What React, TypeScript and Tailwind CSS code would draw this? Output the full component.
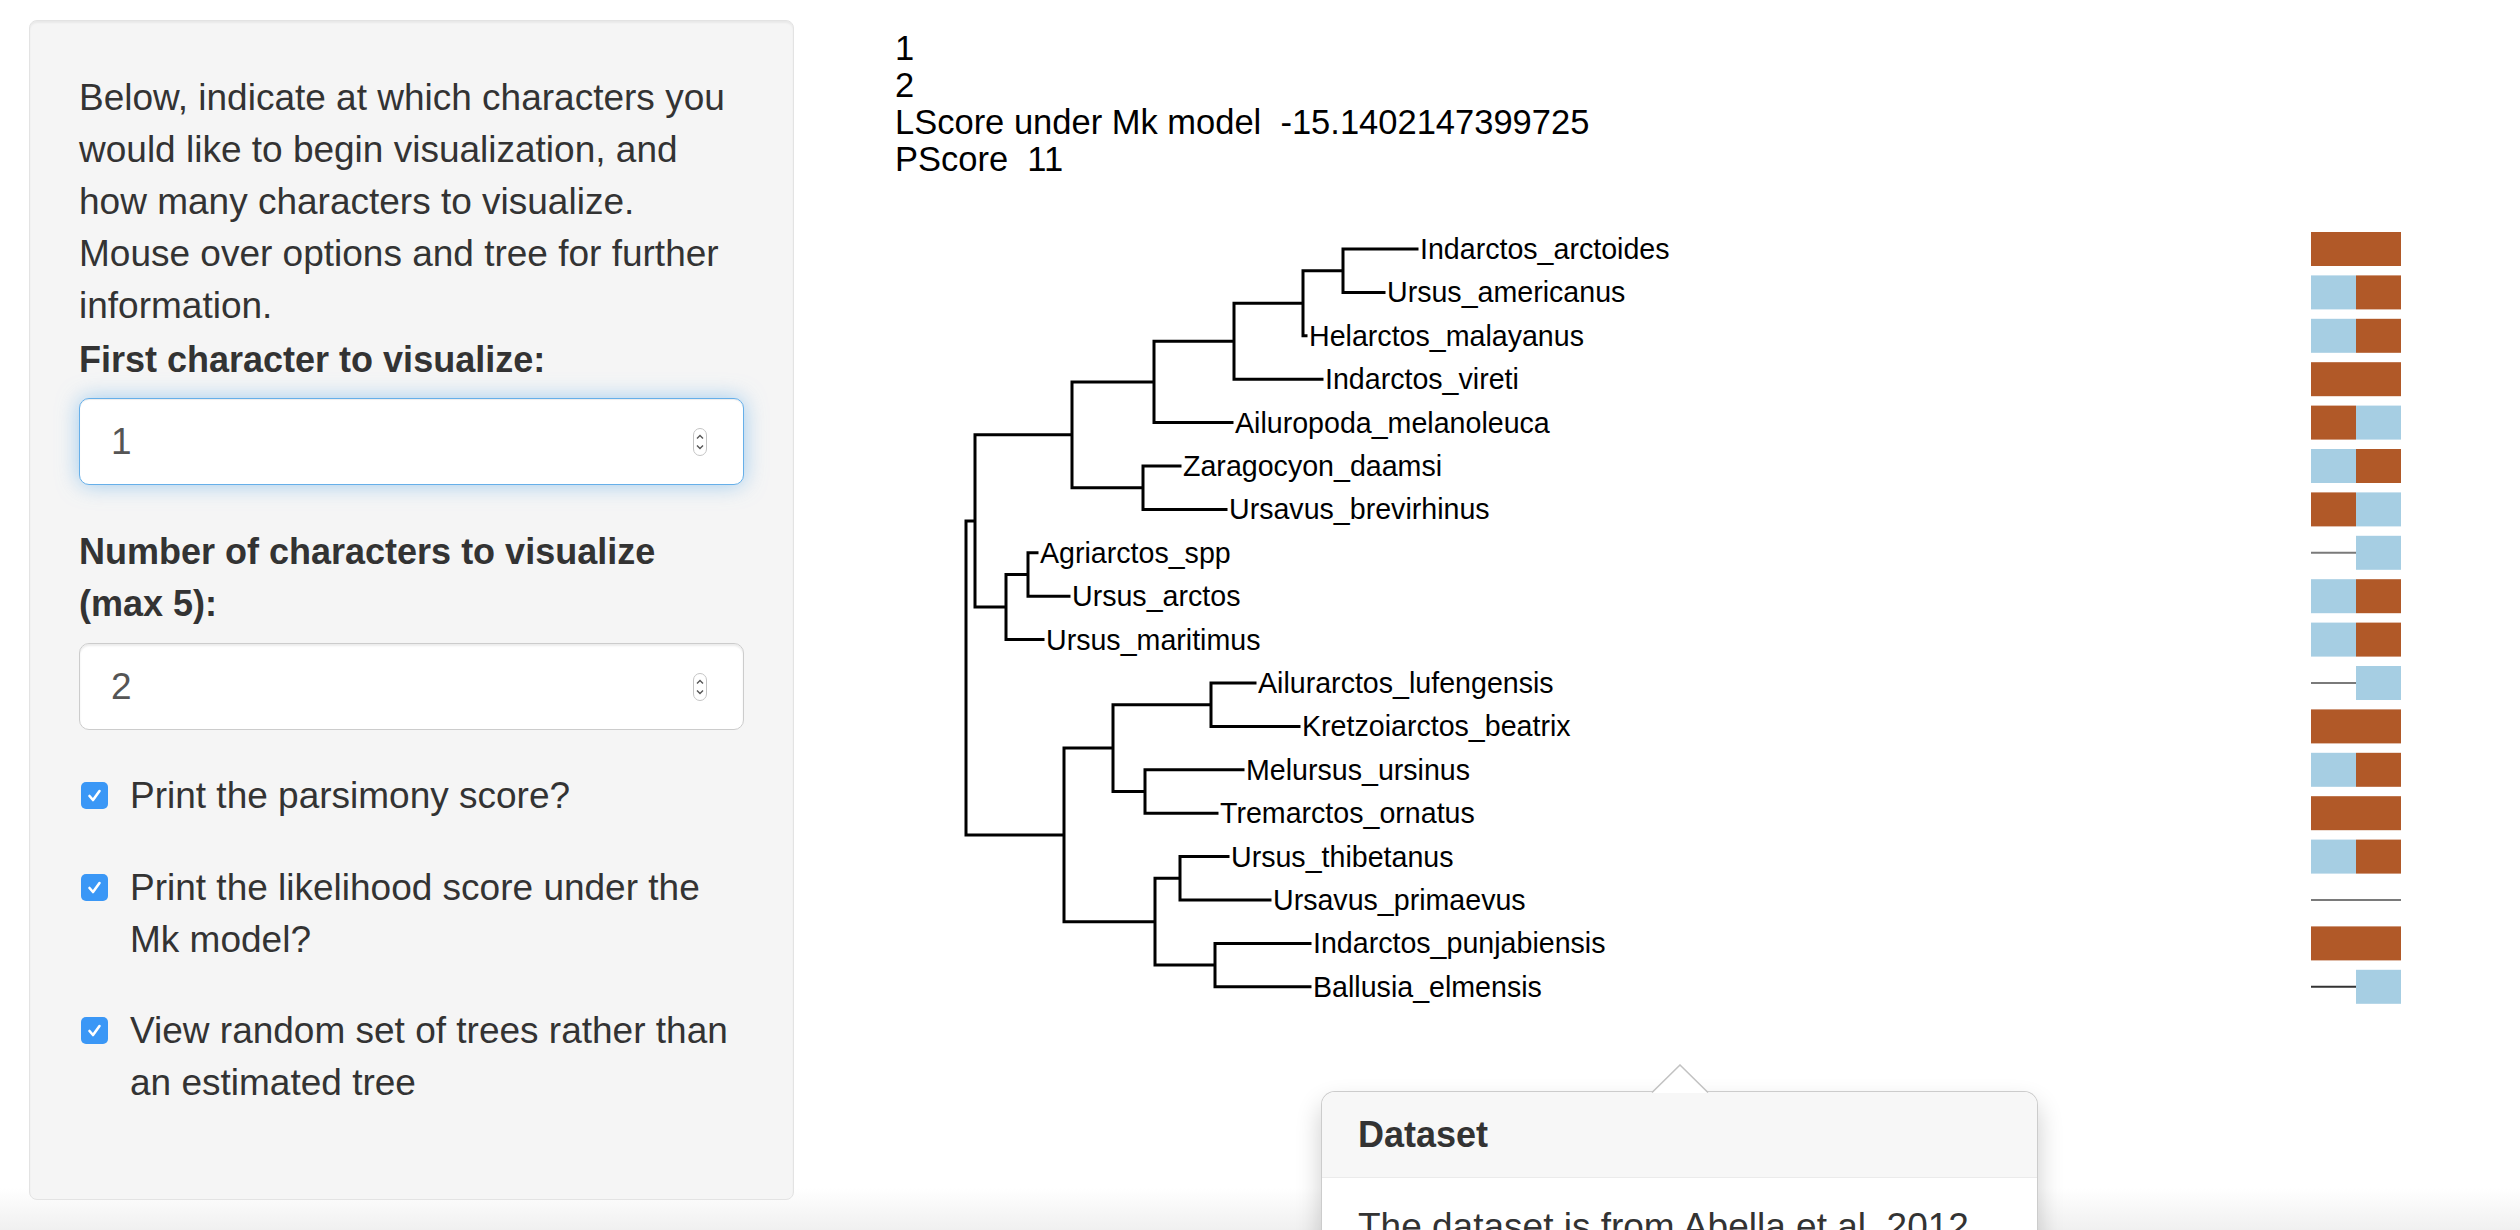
import React from "react";

const ROW0 = 249;
const DY = 43.4;
const rowY = (k: number) => ROW0 + (k - 1) * DY;

const tips: { name: string; end: number }[] = [
  { name: "Indarctos_arctoides", end: 1417 },
  { name: "Ursus_americanus", end: 1384 },
  { name: "Helarctos_malayanus", end: 1306 },
  { name: "Indarctos_vireti", end: 1322 },
  { name: "Ailuropoda_melanoleuca", end: 1232 },
  { name: "Zaragocyon_daamsi", end: 1180 },
  { name: "Ursavus_brevirhinus", end: 1226 },
  { name: "Agriarctos_spp", end: 1037 },
  { name: "Ursus_arctos", end: 1069 },
  { name: "Ursus_maritimus", end: 1043 },
  { name: "Ailurarctos_lufengensis", end: 1255 },
  { name: "Kretzoiarctos_beatrix", end: 1299 },
  { name: "Melursus_ursinus", end: 1243 },
  { name: "Tremarctos_ornatus", end: 1217 },
  { name: "Ursus_thibetanus", end: 1228 },
  { name: "Ursavus_primaevus", end: 1270 },
  { name: "Indarctos_punjabiensis", end: 1310 },
  { name: "Ballusia_elmensis", end: 1310 },
];

// B = brown, L = light blue, M = missing (line)
const states: [string, string][] = [
  ["B", "B"],
  ["L", "B"],
  ["L", "B"],
  ["B", "B"],
  ["B", "L"],
  ["L", "B"],
  ["B", "L"],
  ["M", "L"],
  ["L", "B"],
  ["L", "B"],
  ["M", "L"],
  ["B", "B"],
  ["L", "B"],
  ["B", "B"],
  ["L", "B"],
  ["M", "M"],
  ["B", "B"],
  ["M", "L"],
];

type TNode = { x: number; kids: (TNode | number)[] };

const n = (x: number, kids: (TNode | number)[]): TNode => ({ x, kids });

const tree: TNode = n(966, [
  n(975, [
    n(1072, [
      n(1154, [n(1234, [n(1303, [n(1343, [1, 2]), 3]), 4]), 5]),
      n(1143, [6, 7]),
    ]),
    n(1006, [n(1028, [8, 9]), 10]),
  ]),
  n(1064, [
    n(1113, [n(1211, [11, 12]), n(1145, [13, 14])]),
    n(1155, [n(1180, [15, 16]), n(1215, [17, 18])]),
  ]),
]);

const yOf = (k: TNode | number): number =>
  typeof k === "number"
    ? rowY(k)
    : (yOf(k.kids[0]) + yOf(k.kids[k.kids.length - 1])) / 2;

const xOf = (k: TNode | number): number =>
  typeof k === "number" ? tips[k - 1].end : k.x;

function edges(node: TNode, out: string[]) {
  const y1 = yOf(node.kids[0]);
  const y2 = yOf(node.kids[node.kids.length - 1]);
  out.push(`M${node.x} ${y1}V${y2}`);
  for (const k of node.kids) {
    out.push(`M${node.x} ${yOf(k)}H${xOf(k)}`);
    if (typeof k !== "number") edges(k, out);
  }
  return out;
}

const BROWN = "#b15928";
const BLUE = "#a6cee3";

function TreePlot() {
  const d = edges(tree, []).join(" ");
  return (
    <svg
      width={1625}
      height={820}
      viewBox="895 200 1625 820"
      className="block mt-[22px]"
    >
      <path d={d} stroke="#000" strokeWidth={3} fill="none" strokeLinecap="square" />
      {tips.map((t, i) => (
        <text
          key={t.name}
          x={t.end + 3}
          y={rowY(i + 1)}
          dominantBaseline="central"
          fontSize={28.6}
          fontFamily="'Liberation Sans', Arial, sans-serif"
          fill="#000"
        >
          {t.name}
        </text>
      ))}
      {states.map((s, i) => {
        const y = rowY(i + 1);
        const xs = [2311, 2356];
        return (
          <g key={i}>
            {s.map((st, j) =>
              st === "M" ? (
                <line
                  key={j}
                  x1={xs[j]}
                  x2={xs[j] + 45}
                  y1={y}
                  y2={y}
                  stroke={i === 17 ? "#333" : "#7a7a7a"}
                  strokeWidth={2}
                />
              ) : (
                <rect
                  key={j}
                  x={xs[j]}
                  y={y - 17}
                  width={45}
                  height={34}
                  fill={st === "B" ? BROWN : BLUE}
                />
              )
            )}
          </g>
        );
      })}
    </svg>
  );
}

function Spinner() {
  return (
    <svg width="14" height="28" viewBox="0 0 14 28">
      <rect x="0.5" y="0.5" width="13" height="27" rx="6.5" fill="#fff" stroke="#c4c4c4" />
      <polyline points="4,10.5 7,7.5 10,10.5" fill="none" stroke="#555" strokeWidth="1.4" />
      <polyline points="4,17.5 7,20.5 10,17.5" fill="none" stroke="#555" strokeWidth="1.4" />
    </svg>
  );
}

function Check() {
  return (
    <div className="mt-[12px] ml-[2px] flex h-[27px] w-[27px] shrink-0 items-center justify-center rounded-[5px] bg-[#3a97f6]">
      <svg width="27" height="27" viewBox="0 0 27 27">
        <polyline
          points="8.5,14 12,18 18.5,9"
          fill="none"
          stroke="#fff"
          strokeWidth="2.6"
          strokeLinecap="round"
          strokeLinejoin="round"
        />
      </svg>
    </div>
  );
}

function CheckRow({ lines, className }: { lines: string[]; className: string }) {
  return (
    <div className={`flex items-start ${className}`}>
      <Check />
      <div className="ml-[22px] text-[37px] leading-[52px] whitespace-nowrap">
        {lines.map((l, i) => (
          <div key={i}>{l}</div>
        ))}
      </div>
    </div>
  );
}

export default function App() {
  return (
    <div className="relative h-[1230px] w-[2520px] overflow-hidden bg-[linear-gradient(to_bottom,#ffffff_1188px,#f0f0f0_1230px)] font-['Liberation_Sans',Arial,sans-serif] text-[#333]">
      <div className="flex items-start">
        <div className="ml-[29px] mt-[20px] h-[1180px] w-[765px] shrink-0 rounded-[8px] border border-[#e3e3e3] bg-[#f5f5f5] px-[49px] pt-[51px] shadow-[inset_0_2px_2px_rgba(0,0,0,0.05)]">
          <div className="text-[37px] leading-[52px] whitespace-nowrap">
            <div>Below, indicate at which characters you</div>
            <div>would like to begin visualization, and</div>
            <div>how many characters to visualize.</div>
            <div>Mouse over options and tree for further</div>
            <div>information.</div>
          </div>
          <div className="mt-[2px] text-[36px] font-bold leading-[52px]">First character to visualize:</div>
          <div className="mt-[12px] flex h-[87px] items-center justify-between rounded-[10px] border border-[#66afe9] bg-white pl-[31px] pr-[36px] text-[37px] text-[#555] shadow-[inset_0_1px_1px_rgba(0,0,0,0.075),0_0_21px_rgba(102,175,233,0.6)]">
            <span>1</span>
            <Spinner />
          </div>
          <div className="mt-[41px] text-[36px] font-bold leading-[52px]">
            <div>Number of characters to visualize</div>
            <div>(max 5):</div>
          </div>
          <div className="mt-[13px] flex h-[87px] items-center justify-between rounded-[10px] border border-[#ccc] bg-white pl-[31px] pr-[36px] text-[37px] text-[#555] shadow-[inset_0_2px_2px_rgba(0,0,0,0.075)]">
            <span>2</span>
            <Spinner />
          </div>
          <CheckRow className="mt-[40px]" lines={["Print the parsimony score?"]} />
          <CheckRow className="mt-[40px]" lines={["Print the likelihood score under the", "Mk model?"]} />
          <CheckRow className="mt-[39px]" lines={["View random set of trees rather than", "an estimated tree"]} />
        </div>
        <div className="ml-[101px] flex flex-col pt-[30px]">
          <div className="whitespace-pre text-[34.5px] leading-[37px] text-black">
            <div>1</div>
            <div>2</div>
            <div>LScore under Mk model  -15.1402147399725</div>
            <div>PScore  11</div>
          </div>
          <TreePlot />
        </div>
      </div>

      <div className="absolute left-[1321px] top-[1091px] w-[717px] rounded-[14px] border border-[rgba(0,0,0,0.2)] bg-white shadow-[0_13px_26px_rgba(0,0,0,0.2)]">
        <svg
          width="58"
          height="29"
          viewBox="0 0 58 29"
          className="absolute left-1/2 top-[-28px] -translate-x-1/2"
        >
          <polygon points="1,29 29,1 57,29" fill="#fff" />
          <polyline points="1,28.5 29,1 57,28.5" fill="none" stroke="#c2c2c2" strokeWidth="1.5" />
        </svg>
        <div className="rounded-t-[13px] border-b border-[#ebebeb] bg-[#f7f7f7] px-[36px] py-[21px] text-[36px] font-bold leading-[43px] text-[#333]">
          Dataset
        </div>
        <div className="px-[36px] py-[23px] text-[37px] leading-[52px] text-[#333]">
          The dataset is from Abella et al. 2012
        </div>
      </div>
    </div>
  );
}
